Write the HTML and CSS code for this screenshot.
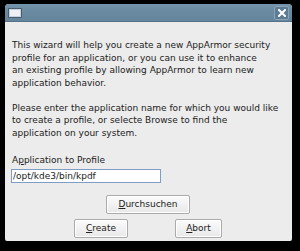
FILE: index.html
```html
<!DOCTYPE html>
<html>
<head>
<meta charset="utf-8">
<link rel="stylesheet" href="styles.css">
</head>
<body>
<div class="window">
  <div class="titlebar">
    <span class="app-icon"></span>
    <span class="close-btn">
      <svg width="8" height="8" viewBox="0 0 8 8"><path d="M1 1 L7 7 M7 1 L1 7" stroke="#fff" stroke-width="2" stroke-linecap="square"/></svg>
    </span>
  </div>
  <div class="content">
    <p class="para">This wizard will help you create a new AppArmor security<br>profile for an application, or you can use it to enhance<br>an existing profile by allowing AppArmor to learn new<br>application behavior.</p>
    <p class="para">Please enter the application name for which you would like<br>to create a profile, or selecte Browse to find the<br>application on your system.</p>
    <div class="label">A<u>p</u>plication to Profile</div>
    <div class="input">/opt/kde3/bin/kpdf</div>
    <div class="row-browse">
      <span class="btn btn-browse"><u>D</u>urchsuchen</span>
    </div>
    <div class="row-actions">
      <span class="btn btn-create"><u>C</u>reate</span>
      <span class="btn btn-abort"><u>A</u>bort</span>
    </div>
  </div>
</div>
</body>
</html>
```
FILE: styles.css
```css
html, body {
  margin: 0;
  padding: 0;
  background: #000;
  width: 300px;
  height: 251px;
  overflow: hidden;
}
body {
  font-family: "DejaVu Sans", sans-serif;
  font-size: 9px;
  color: #222;
}
.window {
  margin: 4px 0 0 5px;
  width: 287px;
  height: 237px;
  background: #ececec;
  border-radius: 4px 4px 2px 2px;
  overflow: hidden;
  display: flex;
  flex-direction: column;
}
.titlebar {
  height: 17px;
  flex: none;
  background: linear-gradient(#7594ab, #6a8aa2 40%, #65859d);
  display: flex;
  align-items: center;
  justify-content: space-between;
  padding: 0 3px 0 3px;
  border-bottom: 1px solid #56728a;
}
.app-icon {
  width: 12px;
  height: 8px;
  background: #eef0f4;
  border: 1px solid #4a5e70;
  box-shadow: inset 0 0 0 1px #c8d0dc;
}
.close-btn {
  width: 13px;
  height: 12px;
  border: 1px solid #8aa4b8;
  border-radius: 2px;
  background: #5d7c94;
  display: flex;
  align-items: center;
  justify-content: center;
}
.content {
  padding: 17px 0 0 7px;
}
.para {
  margin: 0 0 12.5px 0;
  line-height: 12.5px;
  white-space: nowrap;
}
.label {
  line-height: 12.5px;
  margin-top: 15px;
}
.input {
  margin-top: 2px;
  width: 147px;
  height: 12px;
  border: 1px solid #7e9cc4;
  background: #fff;
  line-height: 12px;
  padding-left: 1px;
  margin-left: -1px;
}
.row-browse {
  margin-top: 12px;
  padding-left: 94px;
  display: flex;
}
.row-actions {
  margin-top: 5px;
  padding-left: 62px;
  display: flex;
}
.btn {
  display: flex;
  align-items: center;
  justify-content: center;
  height: 17px;
  border: 1px solid #ababab;
  border-radius: 2px;
  background: linear-gradient(#fbfbfb, #e8e8e8);
  box-shadow: inset 0 0 0 1px #fff;
}
.btn-browse { width: 82px; }
.btn-create { width: 52px; }
.btn-abort { width: 45px; margin-left: 47px; }
```
